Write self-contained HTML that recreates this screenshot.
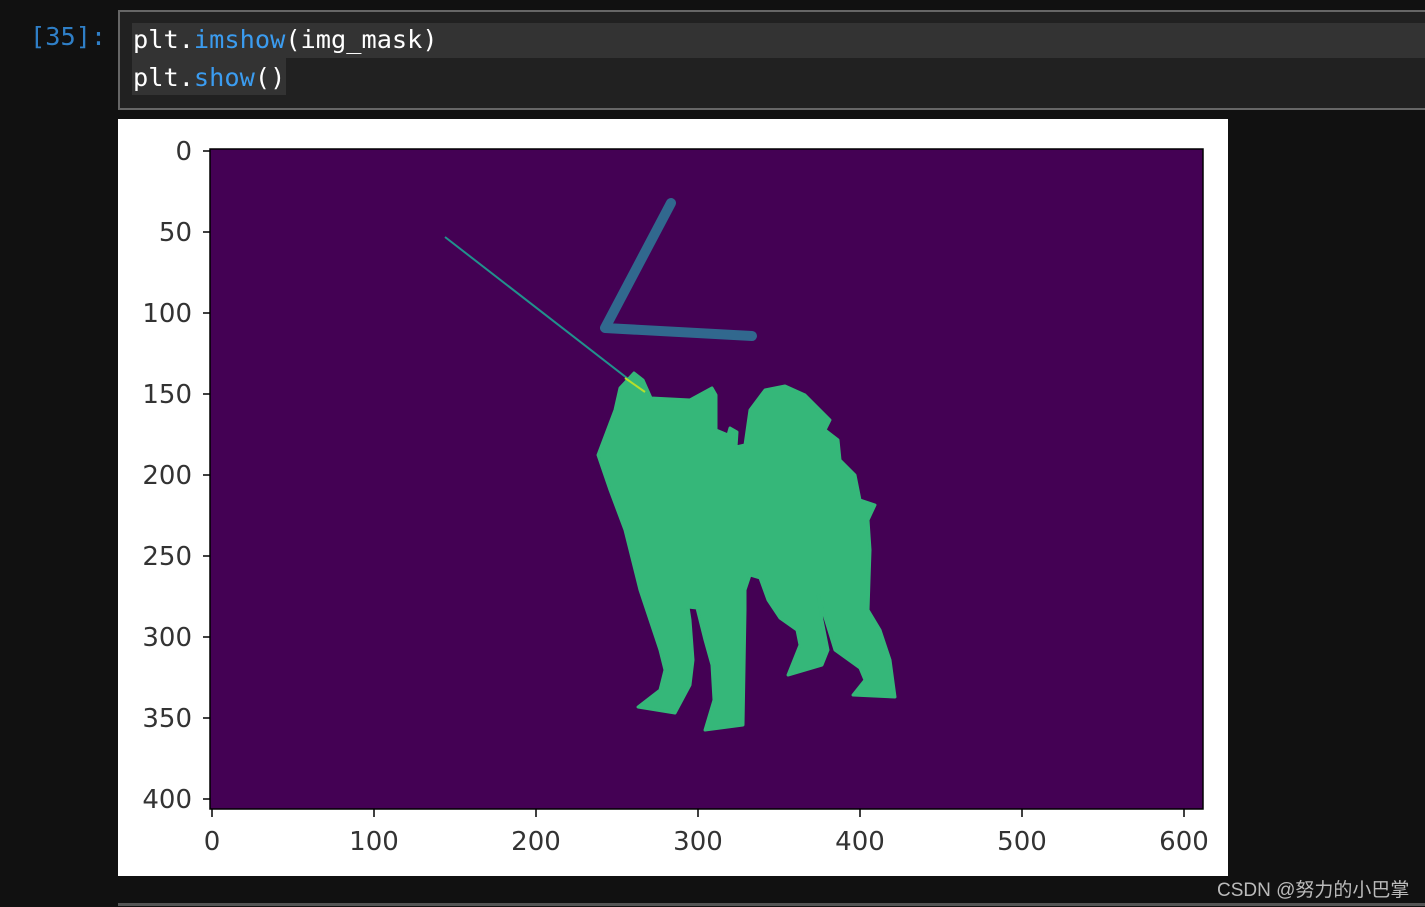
<!DOCTYPE html>
<html><head><meta charset="utf-8"><style>
body{margin:0;width:1425px;height:907px;background:#111;position:relative;overflow:hidden;font-family:"Liberation Sans",sans-serif}
.cell{position:absolute;left:118px;top:10px;width:1307px;height:96px;border:2px solid #666;border-right:none;background:#212121;box-sizing:content-box}
.hl{position:absolute;background:#333}
.code{position:absolute;font-family:"DejaVu Sans Mono","Liberation Mono",monospace;font-size:25.3px;color:#fff;white-space:pre;line-height:36px}
.b{color:#3b9cf0}
.prompt{position:absolute;left:30px;top:22px;font-family:"DejaVu Sans Mono","Liberation Mono",monospace;font-size:25.3px;color:#2f7fc7}
.out{position:absolute;left:118px;top:119px;width:1110px;height:757px;background:#fff}
.wm{position:absolute;left:1217px;top:875px;font-size:19px;color:#bbb;font-family:"Liberation Sans","Noto Sans CJK SC",sans-serif}
.bot{position:absolute;left:118px;top:903px;width:1307px;height:3px;background:#555}
</style></head><body>
<div class="prompt">[35]:</div>
<div class="cell"></div>
<div class="hl" style="left:132px;top:23px;width:1293px;height:35px"></div>
<div class="hl" style="left:132px;top:58px;width:154px;height:37px"></div>
<div class="code" style="left:133px;top:22px">plt.<span class="b">imshow</span>(img_mask)</div>
<div class="code" style="left:133px;top:60px">plt.<span class="b">show</span>()</div>
<div class="out"></div>
<svg style="position:absolute;left:0;top:0" width="1425" height="907">
<rect x="210" y="149" width="993" height="660" fill="#440154" stroke="#000" stroke-width="1.5"/>
<polyline points="671,203 605,328 752,336" fill="none" stroke="#31688e" stroke-width="10" stroke-linejoin="round" stroke-linecap="round"/>
<line x1="445" y1="237" x2="645" y2="392" stroke="#21918c" stroke-width="2"/>
<polygon fill="#35b779" stroke="#35b779" stroke-width="3" stroke-linejoin="round" points="598,455 615,410 620,388 634,373 643,380 651,398 690,400 712,388 716,395 716,430 728,435 730,428 737,432 736,447 745,445 750,410 765,390 785,386 805,395 830,420 825,430 838,440 840,460 855,475 860,500 875,505 868,520 870,550 868,610 880,630 890,660 895,697 853,695 865,680 860,668 835,650 818,595 822,620 828,650 822,665 788,675 800,645 797,630 780,618 768,600 760,578 750,575 745,590 745,610 743,725 705,730 714,700 712,665 705,640 700,620 697,608 688,607 690,620 693,660 690,685 675,713 638,707 660,690 665,670 660,650 640,590 625,530 610,490"/>
<line x1="625" y1="378" x2="645" y2="392" stroke="#b5de2b" stroke-width="2"/>
<g stroke="#000" stroke-width="1.5">
<line x1="203" y1="151" x2="210" y2="151"/><line x1="203" y1="232" x2="210" y2="232"/><line x1="203" y1="313" x2="210" y2="313"/><line x1="203" y1="394" x2="210" y2="394"/><line x1="203" y1="475" x2="210" y2="475"/><line x1="203" y1="556" x2="210" y2="556"/><line x1="203" y1="637" x2="210" y2="637"/><line x1="203" y1="718" x2="210" y2="718"/><line x1="203" y1="799" x2="210" y2="799"/>
<line x1="212" y1="809" x2="212" y2="817"/><line x1="374" y1="809" x2="374" y2="817"/><line x1="536" y1="809" x2="536" y2="817"/><line x1="698" y1="809" x2="698" y2="817"/><line x1="860" y1="809" x2="860" y2="817"/><line x1="1022" y1="809" x2="1022" y2="817"/><line x1="1184" y1="809" x2="1184" y2="817"/>
</g>
<g font-family="DejaVu Sans,Liberation Sans,sans-serif" font-size="26" fill="#333" text-anchor="end">
<text x="192" y="160">0</text><text x="192" y="241">50</text><text x="192" y="322">100</text><text x="192" y="403">150</text><text x="192" y="484">200</text><text x="192" y="565">250</text><text x="192" y="646">300</text><text x="192" y="727">350</text><text x="192" y="808">400</text>
</g>
<g font-family="DejaVu Sans,Liberation Sans,sans-serif" font-size="26" fill="#333" text-anchor="middle">
<text x="212" y="850">0</text><text x="374" y="850">100</text><text x="536" y="850">200</text><text x="698" y="850">300</text><text x="860" y="850">400</text><text x="1022" y="850">500</text><text x="1184" y="850">600</text>
</g>
</svg>
<div class="wm">CSDN @努力的小巴掌</div>
<div class="bot"></div>
</body></html>
